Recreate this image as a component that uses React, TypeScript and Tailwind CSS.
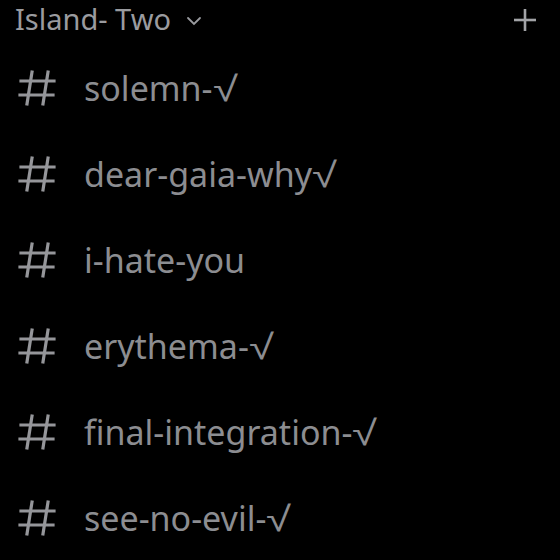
const channels = [
  { name: "solemn-", check: true },
  { name: "dear-gaia-why", check: true },
  { name: "i-hate-you", check: false },
  { name: "erythema-", check: true },
  { name: "final-integration-", check: true },
  { name: "see-no-evil-", check: true },
];

function HashIcon() {
  return (
    <svg width="38" height="38" viewBox="0 0 38 38" fill="none" stroke="#95969a" strokeWidth="3.2" strokeLinecap="square">
      <line x1="14" y1="3" x2="9" y2="35" />
      <line x1="30" y1="3" x2="25" y2="35" />
      <line x1="3" y1="12" x2="36" y2="12" />
      <line x1="2" y1="26" x2="35" y2="26" />
    </svg>
  );
}

export default function App() {
  return (
    <div className="w-[560px] h-[560px] bg-black overflow-hidden" style={{ fontFamily: '"Noto Sans", sans-serif' }}>
      <div className="h-[45px] flex items-start justify-between pl-[15px] pr-[24px] pt-[1px]">
        <div className="flex items-center gap-[15px] text-[#9a9b9f] text-[29px] leading-[36px]">
          <span>Island- Two</span>
          <svg className="mt-[4px]" width="16" height="10" viewBox="0 0 16 10" fill="none" stroke="#9a9b9f" strokeWidth="1.8" strokeLinecap="round">
            <polyline points="2,2 8,8 14,2" />
          </svg>
        </div>
        <svg className="mt-[8px]" width="22" height="22" viewBox="0 0 22 22" fill="none" stroke="#a2a3a7" strokeWidth="2.6">
          <line x1="11" y1="0" x2="11" y2="22" />
          <line x1="0" y1="11" x2="22" y2="11" />
        </svg>
      </div>
      <div className="flex flex-col">
        {channels.map((c) => (
          <div key={c.name} className="h-[86px] flex items-center pl-[18px]">
            <HashIcon />
            <span className="ml-[28px] text-[34px] leading-none text-[#8c8d91]">
              {c.name}
              {c.check && (
                <span
                  className="inline-block origin-left scale-x-[1.3] mr-[4px] text-[35px] text-[#8c8d91]"
                  style={{ fontFamily: '"Liberation Sans", sans-serif' }}
                >
                  √
                </span>
              )}
            </span>
          </div>
        ))}
      </div>
    </div>
  );
}
